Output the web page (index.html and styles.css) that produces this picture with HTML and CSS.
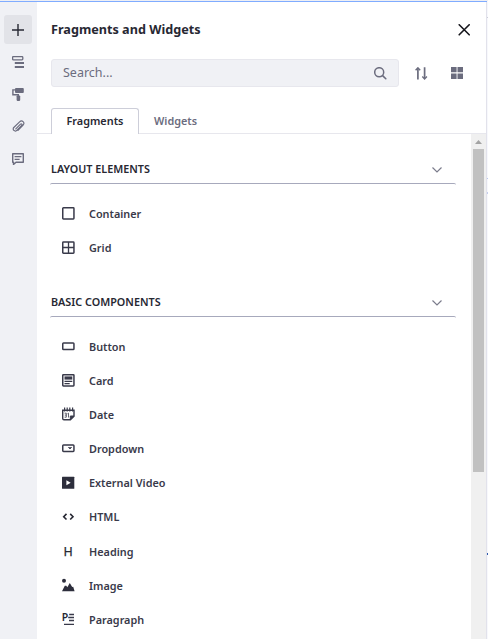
FILE: index.html
```html
<!DOCTYPE html>
<html lang="en">
<head>
<meta charset="utf-8">
<title>Fragments and Widgets</title>
<link rel="stylesheet" href="styles.css">
</head>
<body>
<div class="app">
  <nav class="rail">
    <button class="rail-btn active" aria-label="Add"><svg width="12" height="12" viewBox="0 0 12 12"><path d="M6 0v12M0 6h12" fill="none" stroke="#272833" stroke-width="1.4"/></svg></button>
    <button class="rail-btn" aria-label="Browser"><svg width="12" height="12" viewBox="0 0 12 12"><rect x=".6" y=".6" width="10.2" height="3.2" rx=".8" fill="none" stroke="#6b6c7e" stroke-width="1.3"/><path d="M2.8 7.1H12M2.8 11H12" stroke="#6b6c7e" stroke-width="2"/></svg></button>
    <button class="rail-btn" aria-label="Styles"><svg width="12" height="13" viewBox="0 0 12 13"><rect x="3" y="0" width="8.8" height="5" rx="1" fill="#6b6c7e"/><path d="M3 1.9H.9v4.8h5.4v1.8" fill="none" stroke="#6b6c7e" stroke-width="1.4"/><rect x="4.6" y="7.5" width="3.6" height="5.4" rx=".8" fill="#6b6c7e"/></svg></button>
    <button class="rail-btn" aria-label="Contents"><svg width="13" height="13" viewBox="0 0 13 13"><path d="M3.8 8.9L8.5 4.2c1-1 2.2.2 1.2 1.2L4.8 10.3c-1.9 1.9-4.9-.7-3-2.8l5.8-5.7c2.4-2.3 5.7.8 3.5 3.2L6 10.3" fill="none" stroke="#6b6c7e" stroke-width="1.15" stroke-linecap="round"/></svg></button>
    <button class="rail-btn" aria-label="Comments"><svg width="12" height="12" viewBox="0 0 12 12"><path d="M.7.8h10.6v8.5H4L1.5 11.5V9.3H.7z" fill="none" stroke="#6b6c7e" stroke-width="1.4" stroke-linejoin="round"/><path d="M2.6 3.6h6.8M2.6 6.3h5" stroke="#6b6c7e" stroke-width="1.3"/></svg></button>
  </nav>
  <main class="panel">
    <header class="head">
      <h1>Fragments and Widgets</h1>
      <svg class="close" width="12" height="12" viewBox="0 0 12 12"><path d="M1.2.8l10 10M11.2.8l-10 10" stroke="#16161c" stroke-width="1.6" stroke-linecap="round"/></svg>
    </header>
    <div class="tools">
      <div class="search"><span>Search...</span><svg width="13" height="13" viewBox="0 0 13 13"><circle cx="5.2" cy="5.2" r="4.5" fill="none" stroke="#6b6c7e" stroke-width="1.5"/><path d="M8.6 8.6l3.2 3.1" stroke="#6b6c7e" stroke-width="1.6" stroke-linecap="round"/></svg></div>
      <svg class="sort" width="13" height="13" viewBox="0 0 13 13"><path d="M2.9 12.4V1M9.6.2V11" fill="none" stroke="#6b6c7e" stroke-width="1.7"/><path d="M.6 3.2L2.9.8l2.3 2.4M7.3 9.6l2.3 2.3 2.3-2.3" fill="none" stroke="#6b6c7e" stroke-width="1.4"/></svg>
      <svg class="cards" width="12" height="12" viewBox="0 0 12 12"><path d="M0 0h5.6v5.2H0zM6.5 0h5.5v5.2H6.5zM0 6.5h5.6V12H0zM6.5 6.5h5.5V12H6.5z" fill="#6b6c7e"/></svg>
    </div>
    <div class="tabs"><div class="tab selected">Fragments</div><div class="tab">Widgets</div></div>
    <div class="body">
      <div class="content">
        <section class="group first">
          <h2>Layout Elements<svg width="10" height="6" viewBox="0 0 10 6"><path d="M.5.5L5 5 9.5.5" fill="none" stroke="#7b7c8c" stroke-width="1.2"/></svg></h2>
          <ul>
            <li><svg class="ic" viewBox="0 0 13 13"><rect x=".75" y=".75" width="11.2" height="11.2" rx=".7" fill="none" stroke="#393a4a" stroke-width="1.5"/></svg>Container</li>
            <li><svg class="ic" viewBox="0 0 13 13"><rect x=".75" y=".95" width="11.2" height="11.2" rx=".7" fill="none" stroke="#393a4a" stroke-width="1.5"/><path d="M6.5 1v11M1 6.5h11" stroke="#393a4a" stroke-width="1.3"/></svg>Grid</li>
          </ul>
        </section>
        <section class="group">
          <h2>Basic Components<svg width="10" height="6" viewBox="0 0 10 6"><path d="M.5.5L5 5 9.5.5" fill="none" stroke="#7b7c8c" stroke-width="1.2"/></svg></h2>
          <ul>
            <li><svg class="ic" viewBox="0 0 13 13"><rect x=".75" y="2.9" width="11.2" height="6.6" rx=".8" fill="none" stroke="#393a4a" stroke-width="1.5"/></svg>Button</li>
            <li><svg class="ic" viewBox="0 0 13 13"><rect x=".75" y=".75" width="11.2" height="11.2" rx=".6" fill="none" stroke="#393a4a" stroke-width="1.5"/><path d="M2.5 2.4h7.8v3.2H2.5z" fill="#393a4a"/><path d="M2.5 7.3h7.8M2.5 9.6h5.2" stroke="#393a4a" stroke-width="1.3"/></svg>Card</li>
            <li><svg class="ic" viewBox="0 0 13 13"><path d="M2.6-.5v4M5.2-.5v4M7.8-.5v4M10.6-.5v4" stroke="#393a4a" stroke-width="1.2"/><path d="M.7 2.3v8.2q0 1.3 1.3 1.3h6.4L12 8.2V2.3z" fill="none" stroke="#393a4a" stroke-width="1.4"/><path d="M8.3 11.7V8h3.8" fill="#393a4a" stroke="#393a4a"/><path d="M2.6 5.2h1.7v4H2.6M2.8 7.1h1.5M5.5 5.7l1-.5v4.3" fill="none" stroke="#393a4a" stroke-width=".8"/></svg>Date</li>
            <li><svg class="ic" viewBox="0 0 13 13"><rect x=".75" y="2.9" width="11.2" height="6.5" rx=".8" fill="none" stroke="#393a4a" stroke-width="1.5"/><path d="M6.4 5.2L8 6.9l1.6-1.7" fill="#393a4a" stroke="#393a4a"/></svg>Dropdown</li>
            <li><svg class="ic" viewBox="0 0 13 13"><rect x="0" y=".7" width="12.3" height="12" rx=".5" fill="#2d2e3c"/><path d="M4.4 4.3v4.9l4.3-2.5z" fill="#fff"/></svg>External Video</li>
            <li><svg class="ic" viewBox="0 0 13 13"><path d="M4.5 3.9L1.7 6.7l2.8 2.8M8.2 3.9L11 6.7 8.2 9.5" fill="none" stroke="#272833" stroke-width="1.6"/></svg>HTML</li>
            <li><svg class="ic" viewBox="0 0 13 13"><text class="glyph-h" x="1.5" y="10.9">H</text></svg>Heading</li>
            <li><svg class="ic" viewBox="0 0 13 13"><circle cx="2" cy="1.7" r="2" fill="#2d2e3c"/><path d="M0 12.2l2.8-5.4h1.5l1 1.4L7.8 4.1l2.4 4 1-.3 1.4 4.4z" fill="#2d2e3c"/></svg>Image</li>
            <li><svg class="ic" viewBox="0 0 13 13"><text class="glyph-p" x="-.3" y="8.4">P</text><path d="M7.2 1.5h4.8M6.2 4.5H12M7 7.5h5M2 11.4h10" stroke="#393a4a" stroke-width="1.4"/></svg>Paragraph</li>
          </ul>
        </section>
      </div>
      <div class="scroll"><svg width="7" height="4" viewBox="0 0 7 4"><path d="M3.5 0L7 4H0z" fill="#a3a3a3"/></svg><div class="thumb"></div></div>
    </div>
  </main>
  <aside class="canvas"><i></i><i></i><i></i><i></i></aside>
</div>
</body>
</html>
```
FILE: styles.css
```css
* { box-sizing: border-box; }
body { margin: 0; background: #fff; font-family: "Noto Sans", sans-serif; color: #272833; }
.app { display: flex; height: 639px; overflow: hidden; border-top: 1px solid #eeeff4; position: relative; }
.app::before { content: ""; position: absolute; left: 0; right: 0; top: 0; height: 1px; background: #80acff; }
.rail { width: 37px; background: #f0f1f5; padding: 14px 0 0 4px; display: flex; flex-direction: column; gap: 3px; }
.rail-btn { width: 28px; height: 29px; border: 0; border-radius: 3px; padding: 0; background: none; display: flex; align-items: center; justify-content: center; }
.rail-btn.active { background: #e2e3e8; }
.rail-btn + .rail-btn { height: 29.4px; }
.panel { width: 450px; border-right: 1px solid #e2e2eb; display: flex; flex-direction: column; background: #fff; }
.head { height: 58px; padding: 0 16px 0 14px; display: flex; align-items: center; justify-content: space-between; }
h1 { font-size: 12.65px; line-height: 18px; font-weight: 700; margin: 0 0 2px; }
.close { margin-bottom: 1px; }
.tools { display: flex; align-items: center; height: 28px; padding-left: 14px; }
.search { width: 348px; height: 28px; border: 1px solid #e7e7ed; border-radius: 3px; background: #f0f1f5; color: #6b6c7e; font-size: 12.5px; padding: 0 11px 0 11px; display: flex; justify-content: space-between; align-items: center; }
.search span { margin-top: -2px; }
.sort { margin-left: 16px; }
.cards { margin-left: 23px; }
.tabs { margin-top: 21px; height: 26px; padding-left: 14px; display: flex; border-bottom: 1px solid #e7e7ed; font-size: 10.85px; font-weight: 600; color: #6b6c7e; }
.tab { height: 26px; padding: 0 15px; line-height: 26px; }
.tab.selected { width: 88px; border: 1px solid #cdced9; border-bottom: 0; border-radius: 3px 3px 0 0; background: #fff; color: #272833; padding: 0 14px 0 14.5px; line-height: 24px; }
.body { flex: 1; min-height: 0; display: flex; }
.content { flex: 1; padding: 21px 15px 0 13px; }
.group { height: 133px; }
h2 { margin: 0; height: 28px; padding: 0 14px 0 1px; line-height: 28px; font-size: 10.8px; font-weight: 600; text-transform: uppercase; display: flex; align-items: center; justify-content: space-between; }
h2 svg { margin-top: 1px; }
ul { list-style: none; margin: 0; padding: 12px 0 0 12px; border-top: 1px solid #a7a9bc; border-radius: 2px; }
li { display: flex; align-items: center; height: 34.18px; gap: 14px; font-size: 10.85px; font-weight: 600; color: #393a4a; }
.ic { width: 13px; height: 13px; flex: none; overflow: visible; }
.glyph-h { font-size: 12.5px; font-weight: 400; fill: #272833; stroke: #272833; stroke-width: .25px; }
.glyph-p { font-size: 10.5px; font-weight: 600; fill: #272833; }
.scroll { width: 15px; background: #f0f0f0; display: flex; flex-direction: column; align-items: center; padding-top: 6px; }
.thumb { width: 11px; height: 323px; margin-top: 5px; background: #c1c1c1; }
.canvas { width: 1px; background: #f7f8fc; position: relative; }
.canvas i { position: absolute; left: 0; width: 1px; height: 1px; top: 16px; background: #cdced9; }
.canvas i:nth-child(2) { top: 177px; background: #b9c6ee; }
.canvas i:nth-child(3) { top: 191px; height: 2px; background: #c4cdec; }
.canvas i:nth-child(4) { top: 552px; height: 2px; background: #2e5aac; }
```
